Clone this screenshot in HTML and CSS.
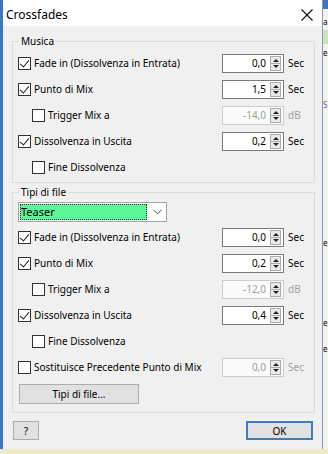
FILE: index.html
```html
<!DOCTYPE html>
<html lang="it">
<head>
    <meta charset="UTF-8">
    <meta name="viewport" content="width=device-width, initial-scale=1.0">
    <title>Crossfades</title>
    <link rel="stylesheet" href="styles.css">
</head>
<body>

    <div class="schermo">
        <div class="bordo-sinistro"></div>

        <div class="finestra">
            <div class="barra-titolo">
                <span class="titolo">Crossfades</span>
                <svg class="chiudi" width="12" height="12" viewBox="0 0 12 12">
                    <path d="M0.5 0.5L11.5 11.5M11.5 0.5L0.5 11.5" stroke="#111" stroke-width="1.1" fill="none"/>
                </svg>
            </div>

            <div class="contenuto">

                <fieldset class="gruppo gruppo-musica">
                    <legend>Musica</legend>

                    <div class="riga">
                        <span class="casella on"></span>
                        <span class="etichetta">Fade in (Dissolvenza in Entrata)</span>
                        <span class="spin"><span class="valore">0,0</span><span class="frecce"></span></span>
                        <span class="unita">Sec</span>
                    </div>
                    <div class="riga">
                        <span class="casella on"></span>
                        <span class="etichetta">Punto di Mix</span>
                        <span class="spin"><span class="valore">1,5</span><span class="frecce"></span></span>
                        <span class="unita">Sec</span>
                    </div>
                    <div class="riga rientro">
                        <span class="casella"></span>
                        <span class="etichetta">Trigger Mix a</span>
                        <span class="spin disabilitato"><span class="valore">-14,0</span><span class="frecce"></span></span>
                        <span class="unita grigio">dB</span>
                    </div>
                    <div class="riga">
                        <span class="casella on"></span>
                        <span class="etichetta">Dissolvenza in Uscita</span>
                        <span class="spin"><span class="valore">0,2</span><span class="frecce"></span></span>
                        <span class="unita">Sec</span>
                    </div>
                    <div class="riga rientro">
                        <span class="casella"></span>
                        <span class="etichetta">Fine Dissolvenza</span>
                    </div>
                </fieldset>

                <fieldset class="gruppo gruppo-tipi">
                    <legend>Tipi di file</legend>

                    <div class="combo">
                        <span class="combo-testo">Teaser</span>
                        <span class="combo-freccia">
                            <svg width="9" height="6" viewBox="0 0 9 6"><path d="M0.5 0.8L4.5 4.8L8.5 0.8" stroke="#444" fill="none"/></svg>
                        </span>
                    </div>

                    <div class="riga">
                        <span class="casella on"></span>
                        <span class="etichetta">Fade in (Dissolvenza in Entrata)</span>
                        <span class="spin"><span class="valore">0,0</span><span class="frecce"></span></span>
                        <span class="unita">Sec</span>
                    </div>
                    <div class="riga">
                        <span class="casella on"></span>
                        <span class="etichetta">Punto di Mix</span>
                        <span class="spin"><span class="valore">0,2</span><span class="frecce"></span></span>
                        <span class="unita">Sec</span>
                    </div>
                    <div class="riga rientro">
                        <span class="casella"></span>
                        <span class="etichetta">Trigger Mix a</span>
                        <span class="spin disabilitato"><span class="valore">-12,0</span><span class="frecce"></span></span>
                        <span class="unita grigio">dB</span>
                    </div>
                    <div class="riga">
                        <span class="casella on"></span>
                        <span class="etichetta">Dissolvenza in Uscita</span>
                        <span class="spin"><span class="valore">0,4</span><span class="frecce"></span></span>
                        <span class="unita">Sec</span>
                    </div>
                    <div class="riga rientro">
                        <span class="casella"></span>
                        <span class="etichetta">Fine Dissolvenza</span>
                    </div>
                    <div class="riga">
                        <span class="casella"></span>
                        <span class="etichetta">Sostituisce Precedente Punto di Mix</span>
                        <span class="spin disabilitato"><span class="valore">0,0</span><span class="frecce"></span></span>
                        <span class="unita grigio">Sec</span>
                    </div>

                    <button class="bottone bottone-tipi">Tipi di file...</button>
                </fieldset>

                <div class="piede">
                    <button class="bottone bottone-aiuto">?</button>
                    <button class="bottone bottone-ok">OK</button>
                </div>

            </div>
        </div>

        <div class="bordo-destro">
            <span class="blu-alto"></span>
            <span class="frammento f-a">a</span>
            <span class="frammento f-verde"></span>
            <span class="frammento f-e">e</span>
            <span class="frammento f-s">S</span>
            <span class="frammento f-te">e</span>
            <span class="frammento f-er">e</span>
            <span class="frammento f-e2">e</span>
        </div>
    </div>

    <div class="striscia-sotto"></div>

</body>
</html>
```

FILE: styles.css
```css
body {
    margin: 0;
    background-color: #eeecc6;
    font-family: "Noto Sans", "Open Sans", sans-serif;
    font-size: 10px;
    color: #000;
}

.schermo {
    display: flex;
    height: 449px;
}

.bordo-sinistro {
    width: 3px;
    background-color: #3a78c2;
}

.finestra {
    width: 319px;
    display: flex;
    flex-direction: column;
    background-color: #f0f0f0;
}

.barra-titolo {
    height: 26px;
    background-color: #fff;
    display: flex;
    align-items: center;
    padding: 0 9px 0 3px;
}

.titolo {
    flex: 1;
    font-size: 12px;
    padding-top: 2px;
}

.chiudi {
    margin-top: 3px;
}

.contenuto {
    flex: 1;
    padding: 9px 7px 0 7px;
}

/* gruppi */
.gruppo {
    margin: 0 0 0 2px;
    border: 1px solid #dcdcdc;
    padding: 3px 1px 2px 5px;
    min-width: 0;
}

.gruppo legend {
    padding: 0 2px;
    margin-left: 1px;
    line-height: 12px;
}

.gruppo-tipi {
    margin-top: 3px;
    padding-top: 4px;
    padding-bottom: 8px;
}

/* righe */
.riga {
    display: flex;
    align-items: center;
    height: 26px;
}

.rientro {
    padding-left: 14px;
}

.casella {
    width: 13px;
    height: 13px;
    box-sizing: border-box;
    border: 1px solid #333;
    background-color: #fff;
    position: relative;
}

.casella.on::after {
    content: "";
    position: absolute;
    left: 3px;
    top: 0px;
    width: 4px;
    height: 8px;
    border-right: 1px solid #222;
    border-bottom: 1px solid #222;
    transform: rotate(40deg);
}

.etichetta {
    flex: 1;
    margin-left: 3px;
    white-space: nowrap;
}

.spin {
    width: 62px;
    height: 19px;
    box-sizing: border-box;
    border: 1px solid #7a7a7a;
    background-color: #fff;
    display: flex;
    align-items: center;
    padding-right: 2px;
}

.spin .valore {
    flex: 1;
    text-align: right;
    padding-right: 4px;
}

.frecce {
    width: 11px;
    height: 15px;
    box-sizing: border-box;
    border: 1px solid #acacac;
    background:
        linear-gradient(#acacac, #acacac) center / 100% 1px no-repeat,
        #eaeaea;
    position: relative;
}

.frecce::before,
.frecce::after {
    content: "";
    position: absolute;
    left: 2px;
    border-left: 3px solid transparent;
    border-right: 3px solid transparent;
}

.frecce::before {
    top: 2px;
    border-bottom: 3px solid #222;
}

.frecce::after {
    bottom: 2px;
    border-top: 3px solid #222;
}

.spin.disabilitato {
    border-color: #cccccc;
    background-color: #fafafa;
}

.spin.disabilitato .valore {
    color: #a0a0a0;
}

.unita {
    width: 25px;
    margin-left: 4px;
}

.grigio {
    color: #a0a0a0;
}

/* combo */
.combo {
    width: 149px;
    height: 20px;
    box-sizing: border-box;
    border: 1px solid #a5a5a5;
    background-color: #fff;
    display: flex;
}

.combo-testo {
    flex: 1;
    margin: 1px;
    background-color: #5cf59a;
    outline: 1px dotted #333;
    outline-offset: -1px;
    line-height: 16px;
    padding-left: 1px;
    font-size: 11px;
}

.combo-freccia {
    width: 18px;
    display: flex;
    align-items: center;
    justify-content: center;
}

.gruppo-tipi .combo + .riga {
    margin-top: 2px;
}

/* bottoni */
.bottone {
    font-family: inherit;
    font-size: 10px;
    background-color: #e1e1e1;
    border: 1px solid #adadad;
    padding: 0;
    color: #000;
}

.bottone-tipi {
    display: block;
    width: 120px;
    height: 20px;
    margin: 4px 0 0 1px;
}

.piede {
    display: flex;
    justify-content: space-between;
    margin-top: 8px;
    padding: 0 2px 0 3px;
}

.bottone-aiuto {
    width: 26px;
    height: 19px;
}

.bottone-ok {
    width: 67px;
    height: 19px;
    border: 2px solid #3d7ebf;
}

/* finestra dietro */
.bordo-destro {
    flex: 1;
    background-color: #f4f3e6;
    border-left: 1px solid #7b9cc4;
    display: flex;
    flex-direction: column;
    overflow: hidden;
    font-size: 8px;
    line-height: 10px;
}

.blu-alto {
    height: 9px;
    background-color: #3a78c2;
}

.frammento {
    display: block;
}

.f-a {
    margin-top: 8px;
}

.f-verde {
    height: 14px;
    margin-top: 3px;
    background-color: #c9e6b5;
}

.f-e {
    margin-top: 4px;
}

.f-s {
    margin-top: 42px;
    color: #7a4fb0;
}

.f-te {
    margin-top: 128px;
}

.f-er {
    margin-top: 70px;
}

.f-e2 {
    margin-top: 16px;
}

.striscia-sotto {
    height: 5px;
    background-color: #eeecc6;
}
```
